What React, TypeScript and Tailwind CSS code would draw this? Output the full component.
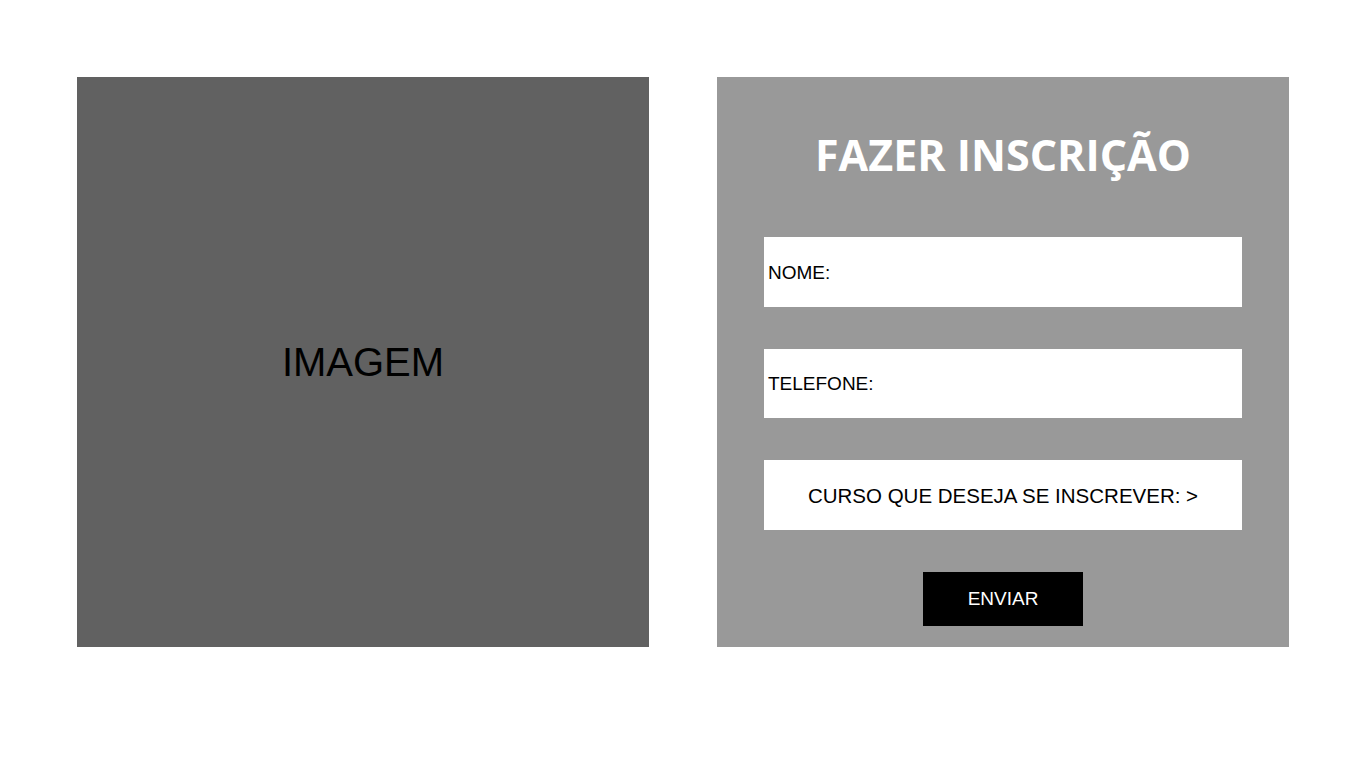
import React from 'react';

const campos = [
    { label: 'NOME:', h: 'h-[70px]' },
    { label: 'TELEFONE:', h: 'h-[69px]' },
];

export default function App() {
    return (
        <div className="w-[1366px] h-[768px] bg-white flex gap-[68px] pl-[77px] pt-[77px]" style={{ fontFamily: '"Liberation Sans", Arial, sans-serif' }}>
            <div className="w-[572px] h-[570px] bg-[#616161] flex items-center justify-center">
                <span className="text-[40px] text-black leading-none">IMAGEM</span>
            </div>

            <div className="w-[572px] h-[570px] bg-[#999999] flex flex-col items-center">
                <h1 className="mt-[55px] h-[46px] text-[43px] leading-[46px] font-bold text-white" style={{ fontFamily: '"Open Sans", sans-serif' }}>
                    FAZER INSCRIÇÃO
                </h1>

                <div className="mt-[59px] flex flex-col gap-[42px]">
                    {campos.map(c => (
                        <div key={c.label} className={`w-[478px] ${c.h} bg-white flex items-center pl-1 pt-[2px] text-[19px] text-black`}>
                            {c.label}
                        </div>
                    ))}
                    <div className="w-[478px] h-[70px] bg-white flex items-center justify-center pt-[2px] text-[20.5px] text-black">
                        CURSO QUE DESEJA SE INSCREVER: &gt;
                    </div>
                </div>

                <button className="mt-[42px] w-[160px] h-[54px] bg-black text-white text-[19px] flex items-center justify-center">
                    ENVIAR
                </button>
            </div>
        </div>
    );
}
